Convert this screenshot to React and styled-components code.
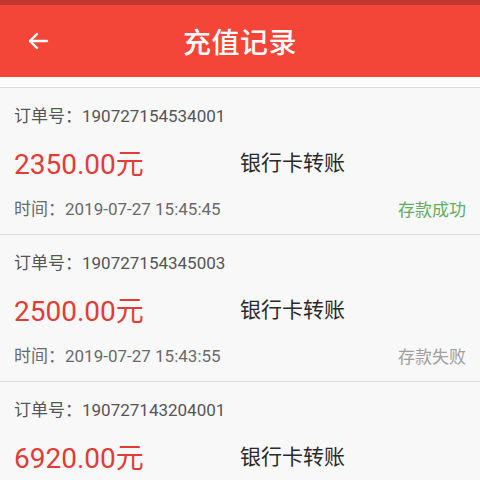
import React from "react";
import styled, { createGlobalStyle } from "styled-components";

const Global = createGlobalStyle`
  html, body { margin: 0; padding: 0; background: #f8f8f8; }
  body { font-family: Roboto, "Noto Sans CJK SC", sans-serif; width: 480px; height: 480px; overflow: hidden; }
`;

const Page = styled.div`
  width: 480px;
  height: 480px;
  overflow: hidden;
  background: #f8f8f8;
  display: flex;
  flex-direction: column;
`;

const StatusBar = styled.div`
  height: 5px;
  background: #c2372d;
  flex-shrink: 0;
`;

const Header = styled.header`
  height: 72px;
  background: #f34538;
  display: flex;
  align-items: center;
  justify-content: center;
  position: relative;
  flex-shrink: 0;
`;

const Back = styled.button`
  position: absolute;
  left: 24px;
  top: 50%;
  transform: translateY(-50%);
  background: none;
  border: none;
  padding: 0;
  width: 28px;
  height: 28px;
  display: flex;
  align-items: center;
  justify-content: center;
`;

const Title = styled.h1`
  margin: 0;
  color: #fff;
  font-size: 28px;
  font-weight: 500;
  font-family: "Noto Sans CJK SC", sans-serif;
  letter-spacing: 0.5px;
`;

const Gap = styled.div`
  height: 10px;
  background: #fcfcfc;
  border-bottom: 1px solid #dcdcdc;
  flex-shrink: 0;
`;

const Card = styled.div`
  height: 146px;
  border-bottom: 1px solid #dcdcdc;
  box-sizing: content-box;
  flex-shrink: 0;
  padding: 0 14px;
  display: grid;
  grid-template-rows: 56px 40px 50px;
`;

const OrderLine = styled.div`
  display: flex;
  align-items: center;
  font-size: 17px;
  color: #555;
  line-height: 24px;
`;

const Middle = styled.div`
  display: flex;
  align-items: center;
`;

const Amount = styled.div`
  width: 226px;
  font-size: 28px;
  color: #e23c36;
  line-height: 34px;
  padding-top: 2px;
`;

const Method = styled.div`
  font-size: 21px;
  color: #2a2a2a;
  font-family: "Noto Sans CJK SC", sans-serif;
  line-height: 28px;
  padding-bottom: 6px;
`;

const Bottom = styled.div`
  display: flex;
  justify-content: space-between;
  align-items: center;
  font-size: 17px;
  line-height: 24px;
`;

const Time = styled.span`
  color: #6a6a6a;
`;

const Status = styled.span`
  color: ${(p) => (p.$ok ? "#5fad5f" : "#a0a0a0")};
  font-family: "Noto Sans CJK SC", sans-serif;
`;

const records = [
  { no: "190727154534001", amount: "2350.00", time: "2019-07-27 15:45:45", status: "存款成功", ok: true },
  { no: "190727154345003", amount: "2500.00", time: "2019-07-27 15:43:55", status: "存款失败", ok: false },
  { no: "190727143204001", amount: "6920.00", time: "2019-07-27 14:32:04", status: "存款成功", ok: true },
];

export default function App() {
  return (
    <Page>
      <Global />
      <StatusBar />
      <Header>
        <Back aria-label="back">
          <svg width="24" height="24" viewBox="0 0 24 24" fill="none" stroke="#fff" strokeWidth="2.4" strokeLinecap="round" strokeLinejoin="round">
            <path d="M21 12H4" />
            <path d="M11 5l-7 7 7 7" />
          </svg>
        </Back>
        <Title>充值记录</Title>
      </Header>
      <Gap />
      {records.map((r) => (
        <Card key={r.no}>
          <OrderLine>订单号：{r.no}</OrderLine>
          <Middle>
            <Amount>{r.amount}元</Amount>
            <Method>银行卡转账</Method>
          </Middle>
          <Bottom>
            <Time>时间：{r.time}</Time>
            <Status $ok={r.ok}>{r.status}</Status>
          </Bottom>
        </Card>
      ))}
    </Page>
  );
}
